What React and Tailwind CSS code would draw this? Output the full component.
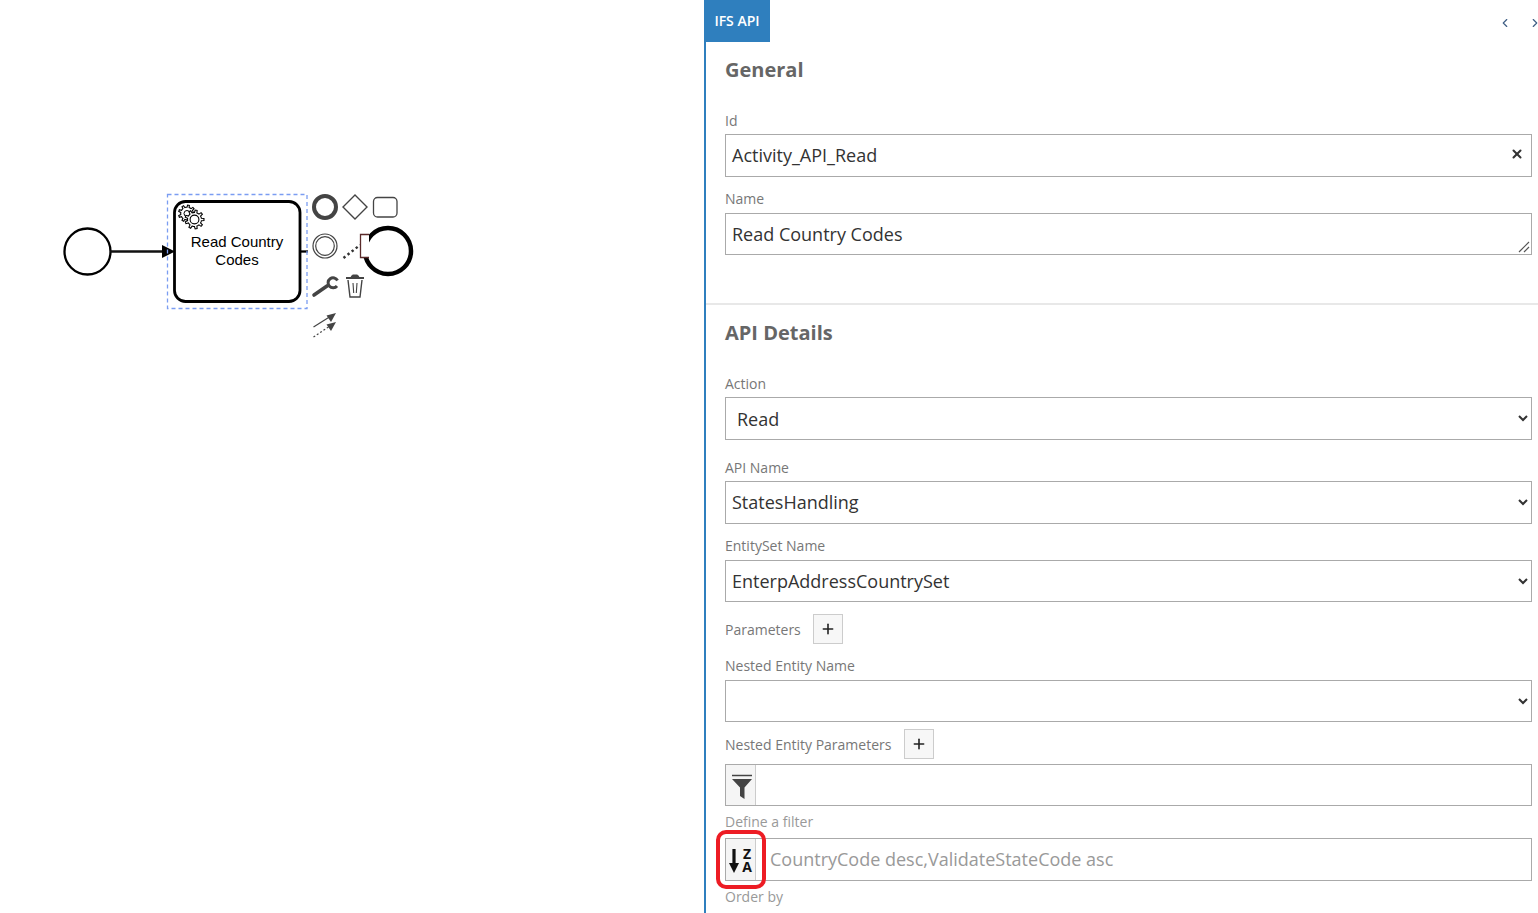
import React from "react";
import { X, ChevronLeft, ChevronRight, Plus } from "lucide-react";

// builds a gear outline for the service task marker
const gearPath = (cx, cy, outer, inner, teeth) => {
  const pts = [];
  const step = (Math.PI * 2) / teeth;
  for (let i = 0; i < teeth; i++) {
    const a = i * step;
    [
      [inner, a - step * 0.5],
      [inner, a - step * 0.25],
      [outer, a - step * 0.15],
      [outer, a + step * 0.15],
      [inner, a + step * 0.25],
    ].forEach(([r, t]) => pts.push(`${(cx + r * Math.cos(t)).toFixed(2)} ${(cy + r * Math.sin(t)).toFixed(2)}`));
  }
  return `M${pts.join("L")}Z`;
};

const Diagram = () => (
  <svg width="704" height="913" className="absolute left-0 top-0">
    {/* start event and flow */}
    <circle cx="87.5" cy="251.5" r="23" fill="white" stroke="black" strokeWidth="2.3" />
    <path d="M110 251.5H165" stroke="#111" strokeWidth="2.3" />
    <path d="M162 245L175 251.5L162 258Z" fill="black" />

    {/* task */}
    <rect x="174.5" y="201.5" width="125.5" height="100" rx="11" fill="white" stroke="black" strokeWidth="2.8" />
    <path d={gearPath(187, 213.5, 8.5, 6.3, 9)} fill="white" stroke="black" strokeWidth="1.1" />
    <circle cx="187" cy="213.5" r="3" fill="white" stroke="black" strokeWidth="1" />
    <path d={gearPath(194.5, 219.5, 9.5, 7, 9)} fill="white" stroke="black" strokeWidth="1.1" />
    <circle cx="194.5" cy="219.5" r="4.4" fill="white" stroke="black" strokeWidth="1.1" />
    <text x="237" y="247" textAnchor="middle" fontSize="15" fill="black" fontFamily="'Liberation Sans', Arial, sans-serif">Read Country</text>
    <text x="237" y="265" textAnchor="middle" fontSize="15" fill="black" fontFamily="'Liberation Sans', Arial, sans-serif">Codes</text>

    {/* selection outline */}
    <path d="M300 251.5H308" stroke="black" strokeWidth="2.3" />
    <rect x="167.5" y="194.5" width="139.5" height="114" fill="none" stroke="#7b9df2" strokeWidth="1.3" strokeDasharray="4 3" />

    {/* end event, annotation bracket sits on top of it */}
    <circle cx="388" cy="251" r="23" fill="white" stroke="black" strokeWidth="4.5" />
    <rect x="360" y="234" width="9" height="24" fill="white" />
    <path d="M369 234.5H360.5V257.5H369" fill="none" stroke="#5a2a2a" strokeWidth="1.3" />
    <path d="M343.5 258L360 245" stroke="#333" strokeWidth="2.4" strokeDasharray="2.4 2.8" />

    {/* context pad */}
    <circle cx="325" cy="207" r="11" fill="white" stroke="#444" strokeWidth="4" />
    <path d="M355 195L367 207L355 219L343 207Z" fill="white" stroke="#444" strokeWidth="1.4" />
    <rect x="373.5" y="197.5" width="23.5" height="19.5" rx="4" fill="white" stroke="#444" strokeWidth="1.3" />
    <circle cx="325" cy="246" r="12" fill="white" stroke="#444" strokeWidth="1.2" />
    <circle cx="325" cy="246" r="9.3" fill="white" stroke="#444" strokeWidth="1.2" />
    <path d="M314 295L327 286" stroke="#444" strokeWidth="3.6" strokeLinecap="round" />
    <path d="M337.5 280.5A5 5 0 1 0 337 286" fill="none" stroke="#444" strokeWidth="3" />
    <path d="M346 278H364" stroke="#444" strokeWidth="2" />
    <path d="M351 277L352.5 275H357.5L359 277Z" fill="#444" stroke="#444" strokeWidth="1" />
    <path d="M348 280L350 297H360L362 280" fill="white" stroke="#444" strokeWidth="1.4" />
    <path d="M353 283L353.7 293M357 283L356.3 293" stroke="#444" strokeWidth="1.1" />
    <path d="M313.5 327L331 316" stroke="#444" strokeWidth="1.2" />
    <path d="M336 313L331 322L326.5 315.5Z" fill="#444" />
    <path d="M313.5 337L330 326" stroke="#444" strokeWidth="1.2" strokeDasharray="2 2" />
    <path d="M336 322L331 331L326.5 324.5Z" fill="#444" />
  </svg>
);

const labelClass = "h-5 text-[14px] leading-5 text-[#777]";
const inputClass = "flex w-full items-center border border-[#aaa] bg-white pl-[6px] text-[18px] text-[#333]";
const selectClass = "block w-full border border-[#aaa] bg-white pl-[2px] text-[18px] text-[#333] outline-none";
const plusClass = "flex h-[30px] w-[30px] items-center justify-center border border-[#ccc] bg-[#f7f7f7] text-[#222]";
const addonClass = "flex h-full w-[30px] shrink-0 items-center justify-center border-r border-[#ccc] bg-[#f5f5f5]";
const headingClass = "h-7 text-[20px] font-bold leading-7 text-[#666]";

const App = () => {
  return (
    <div className="relative flex h-[913px] w-[1538px] overflow-hidden bg-white font-['Open_Sans',sans-serif]">
      {/* canvas */}
      <div className="relative w-[704px] shrink-0">
        <Diagram />
      </div>

      {/* properties panel */}
      <div className="flex w-[834px] flex-col border-l-2 border-[#2f7fbe]">
        <div className="flex h-[42px] shrink-0 items-start justify-between">
          <div className="flex h-[42px] w-[64px] items-center justify-center bg-[#2f7fbe] pb-[2px] pr-[2px] text-[14px] font-semibold text-white">
            IFS API
          </div>
          <div className="flex items-center gap-[16px] pt-[16px] text-[#3f5f85]">
            <ChevronLeft size={14} strokeWidth={2} />
            <ChevronRight size={14} strokeWidth={2} className="-mr-[4px]" />
          </div>
        </div>

        <div className="pl-[19px] pr-[6px]">
          <h2 className={`mt-[14px] ${headingClass}`}>General</h2>
          <div className={`mt-[27px] ${labelClass}`}>Id</div>
          <div className={`relative mt-[3px] h-[43px] ${inputClass}`}>
            Activity_API_Read
            <X size={14} strokeWidth={3.5} className="absolute right-[7px] top-[12px] text-[#333]" />
          </div>
          <div className={`mt-[12px] ${labelClass}`}>Name</div>
          <div className={`relative mt-[4px] h-[42px] ${inputClass}`}>
            Read Country Codes
            <svg width="12" height="12" className="absolute bottom-px right-px">
              <path d="M1 11L11 1M6 11L11 6" stroke="#555" strokeWidth="1.2" />
            </svg>
          </div>
        </div>

        <div className="mt-[48px] h-[2px] shrink-0 bg-[#e8e8e8]" />

        <div className="pl-[19px] pr-[6px]">
          <h2 className={`mt-[14px] ${headingClass}`}>API Details</h2>
          <div className={`mt-[27px] ${labelClass}`}>Action</div>
          <select className={`mt-[3px] h-[43px] !pl-[7px] ${selectClass}`} defaultValue="Read">
            <option>Read</option>
          </select>
          <div className={`mt-[18px] ${labelClass}`}>API Name</div>
          <select className={`mt-[3px] h-[43px] pb-[2px] ${selectClass}`} defaultValue="StatesHandling">
            <option>StatesHandling</option>
          </select>
          <div className={`mt-[12px] ${labelClass}`}>EntitySet Name</div>
          <select className={`mt-[4px] h-[42px] ${selectClass}`} defaultValue="EnterpAddressCountrySet">
            <option>EnterpAddressCountrySet</option>
          </select>

          <div className="mt-[12px] flex h-[30px] items-center gap-[12px]">
            <span className="text-[14px] text-[#777]">Parameters</span>
            <button className={plusClass}>
              <Plus size={16} strokeWidth={2.4} />
            </button>
          </div>

          <div className={`mt-[12px] ${labelClass}`}>Nested Entity Name</div>
          <select className={`mt-[4px] h-[42px] ${selectClass}`}>
            <option></option>
          </select>

          <div className="mt-[7px] flex h-[30px] items-center gap-[13px]">
            <span className="text-[14px] text-[#777]">Nested Entity Parameters</span>
            <button className={plusClass}>
              <Plus size={16} strokeWidth={2.4} />
            </button>
          </div>

          <div className="mt-[5px] flex h-[42px] border border-[#aaa]">
            <div className={addonClass}>
              <svg width="20" height="26" viewBox="0 0 20 26" className="ml-[2px] mt-[3px]">
                <path d="M0 1.5H20" stroke="#444" strokeWidth="1.5" />
                <path d="M0 5H20L12.5 13.5V25L8 22V13.5Z" fill="#444" />
              </svg>
            </div>
          </div>
          <div className={`mt-[6px] ${labelClass} !text-[#999]`}>Define a filter</div>

          <div className="relative mt-[6px] flex h-[43px] items-center border border-[#aaa]">
            <div className={addonClass}>
              <svg width="10" height="24" viewBox="0 0 10 24" className="mt-[2px]">
                <path d="M5 0V16" stroke="#111" strokeWidth="3.2" />
                <path d="M0 14H10L5 24Z" fill="#111" />
              </svg>
              <span className="ml-[3px] block w-[10px] text-center text-[14px] font-bold leading-[13px] text-[#111]">
                Z A
              </span>
            </div>
            <span className="pl-[14px] text-[18px] text-[#999]">CountryCode desc,ValidateStateCode asc</span>
            {/* red annotation from the screenshot */}
            <div className="absolute -left-[10px] -top-[9px] h-[59px] w-[50px] rounded-[10px] border-[4.5px] border-[#ed1c24]" />
          </div>
          <div className={`mt-[6px] ${labelClass} !text-[#999]`}>Order by</div>
        </div>
      </div>
    </div>
  );
};

export default App;
